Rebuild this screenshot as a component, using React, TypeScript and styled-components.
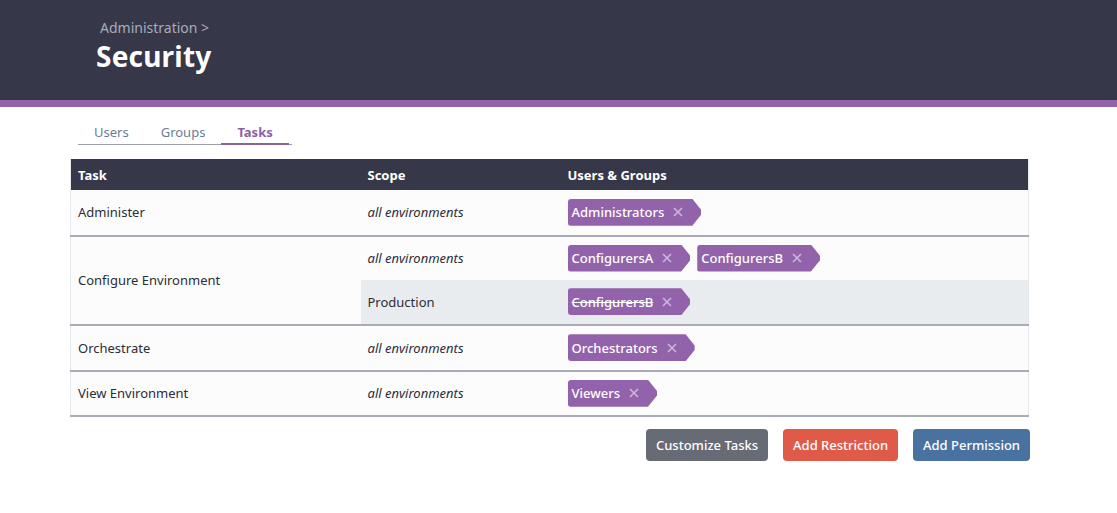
import React from "react"
import styled, { createGlobalStyle } from "styled-components"

const GlobalStyle = createGlobalStyle`
  body {
    margin: 0;
    background: #ffffff;
    font-family: "Noto Sans", "Open Sans", sans-serif;
    color: #2b2d38;
  }
`

const Header = styled.header`
  height: 107px;
  box-sizing: border-box;
  background: #363749;
  border-bottom: 7px solid #9263aa;
  padding: 18px 0 0 96px;
`

const Crumb = styled.div`
  font-size: 14px;
  color: #a8abbb;
  padding-left: 4px;
  line-height: 20px;
`

const Title = styled.h1`
  margin: 0;
  font-size: 28px;
  font-weight: 700;
  color: #ffffff;
  line-height: 36px;
  letter-spacing: 0.2px;
`

const Content = styled.main`
  width: 959px;
  margin-left: 70px;
  padding-top: 16px;
`

const Tabs = styled.nav`
  display: flex;
  margin-left: 8px;
  width: 214px;
  border-bottom: 1px solid #9aa0aa;
  margin-bottom: 14px;
`

const Tab = styled.a<{ $active?: boolean }>`
  padding: 0 16px 2px;
  font-size: 13px;
  line-height: 18px;
  color: ${p => (p.$active ? "#8e5fa8" : "#6a7d96")};
  font-weight: ${p => (p.$active ? 700 : 400)};
  border-bottom: 2px solid ${p => (p.$active ? "#8e5fa8" : "transparent")};
  margin-bottom: -1px;
  cursor: pointer;
`

const Table = styled.table`
  width: 100%;
  border-collapse: collapse;
  border: 1px solid #e6e8ec;
  border-top: none;
  font-size: 13px;
`

const Th = styled.th<{ $w?: number }>`
  background: #363749;
  color: #ffffff;
  text-align: left;
  font-weight: 700;
  height: 31px;
  padding: 0 7px;
  width: ${p => (p.$w ? `${p.$w}px` : "auto")};
  box-sizing: border-box;
`

const Tr = styled.tr<{ $end?: boolean }>`
  height: ${p => (p.$end ? "45.5px" : "44px")};
  border-bottom: ${p => (p.$end ? "2px solid #a9acb5" : "none")};
`

const Td = styled.td<{ $shade?: boolean; $italic?: boolean }>`
  padding: 0 8px 0 7px;
  background: ${p => (p.$shade ? "#e8ecee" : "#fcfcfc")};
  font-style: ${p => (p.$italic ? "italic" : "normal")};
  font-size: 13px;
  color: #2b2d38;
  vertical-align: middle;
`

const TagList = styled.div`
  display: flex;
  gap: 7px;
`

const Tag = styled.span<{ $revoked?: boolean }>`
  display: inline-flex;
  align-items: center;
  gap: 9px;
  height: 27px;
  padding: 0 18px 0 4px;
  background: #9263aa;
  color: #ffffff;
  font-weight: 500;
  font-size: 13px;
  border-radius: 3px 0 0 3px;
  clip-path: polygon(0 0, calc(100% - 9px) 0, 100% 42%, 100% 58%, calc(100% - 9px) 100%, 0 100%);
  text-decoration: ${p => (p.$revoked ? "line-through" : "none")};
`

const Remove = styled.svg`
  width: 10px;
  height: 10px;
  flex: none;
`

const Actions = styled.div`
  display: flex;
  justify-content: flex-end;
  gap: 15px;
  margin-top: 12px;
  margin-right: -1px;
`

const Button = styled.button<{ $tone: string }>`
  height: 32px;
  padding: 0 10px;
  border: none;
  border-radius: 4px;
  background: ${p => p.$tone};
  color: #ffffff;
  font-family: inherit;
  font-size: 13px;
  font-weight: 500;
  cursor: pointer;
`

function Chip({ name, revoked }: { name: string; revoked?: boolean }) {
  return (
    <Tag $revoked={revoked}>
      {name}
      <Remove viewBox="0 0 10 10">
        <path d="M1 1 L9 9 M9 1 L1 9" stroke="#cdb6da" strokeWidth="1.6" />
      </Remove>
    </Tag>
  )
}

export default function App() {
  return (
    <>
      <GlobalStyle />
      <Header>
        <Crumb>Administration &gt;</Crumb>
        <Title>Security</Title>
      </Header>
      <Content>
        <Tabs>
          <Tab>Users</Tab>
          <Tab>Groups</Tab>
          <Tab $active>Tasks</Tab>
        </Tabs>
        <Table>
          <thead>
            <tr>
              <Th $w={290}>Task</Th>
              <Th $w={200}>Scope</Th>
              <Th>Users &amp; Groups</Th>
            </tr>
          </thead>
          <tbody>
            <Tr $end>
              <Td>Administer</Td>
              <Td $italic>all environments</Td>
              <Td>
                <TagList>
                  <Chip name="Administrators" />
                </TagList>
              </Td>
            </Tr>
            <Tr>
              <Td rowSpan={2}>Configure Environment</Td>
              <Td $italic>all environments</Td>
              <Td>
                <TagList>
                  <Chip name="ConfigurersA" />
                  <Chip name="ConfigurersB" />
                </TagList>
              </Td>
            </Tr>
            <Tr $end>
              <Td $shade>Production</Td>
              <Td $shade>
                <TagList>
                  <Chip name="ConfigurersB" revoked />
                </TagList>
              </Td>
            </Tr>
            <Tr $end>
              <Td>Orchestrate</Td>
              <Td $italic>all environments</Td>
              <Td>
                <TagList>
                  <Chip name="Orchestrators" />
                </TagList>
              </Td>
            </Tr>
            <Tr $end>
              <Td>View Environment</Td>
              <Td $italic>all environments</Td>
              <Td>
                <TagList>
                  <Chip name="Viewers" />
                </TagList>
              </Td>
            </Tr>
          </tbody>
        </Table>
        <Actions>
          <Button $tone="#676b75">Customize Tasks</Button>
          <Button $tone="#e05a4a">Add Restriction</Button>
          <Button $tone="#4a72a0">Add Permission</Button>
        </Actions>
      </Content>
    </>
  )
}
